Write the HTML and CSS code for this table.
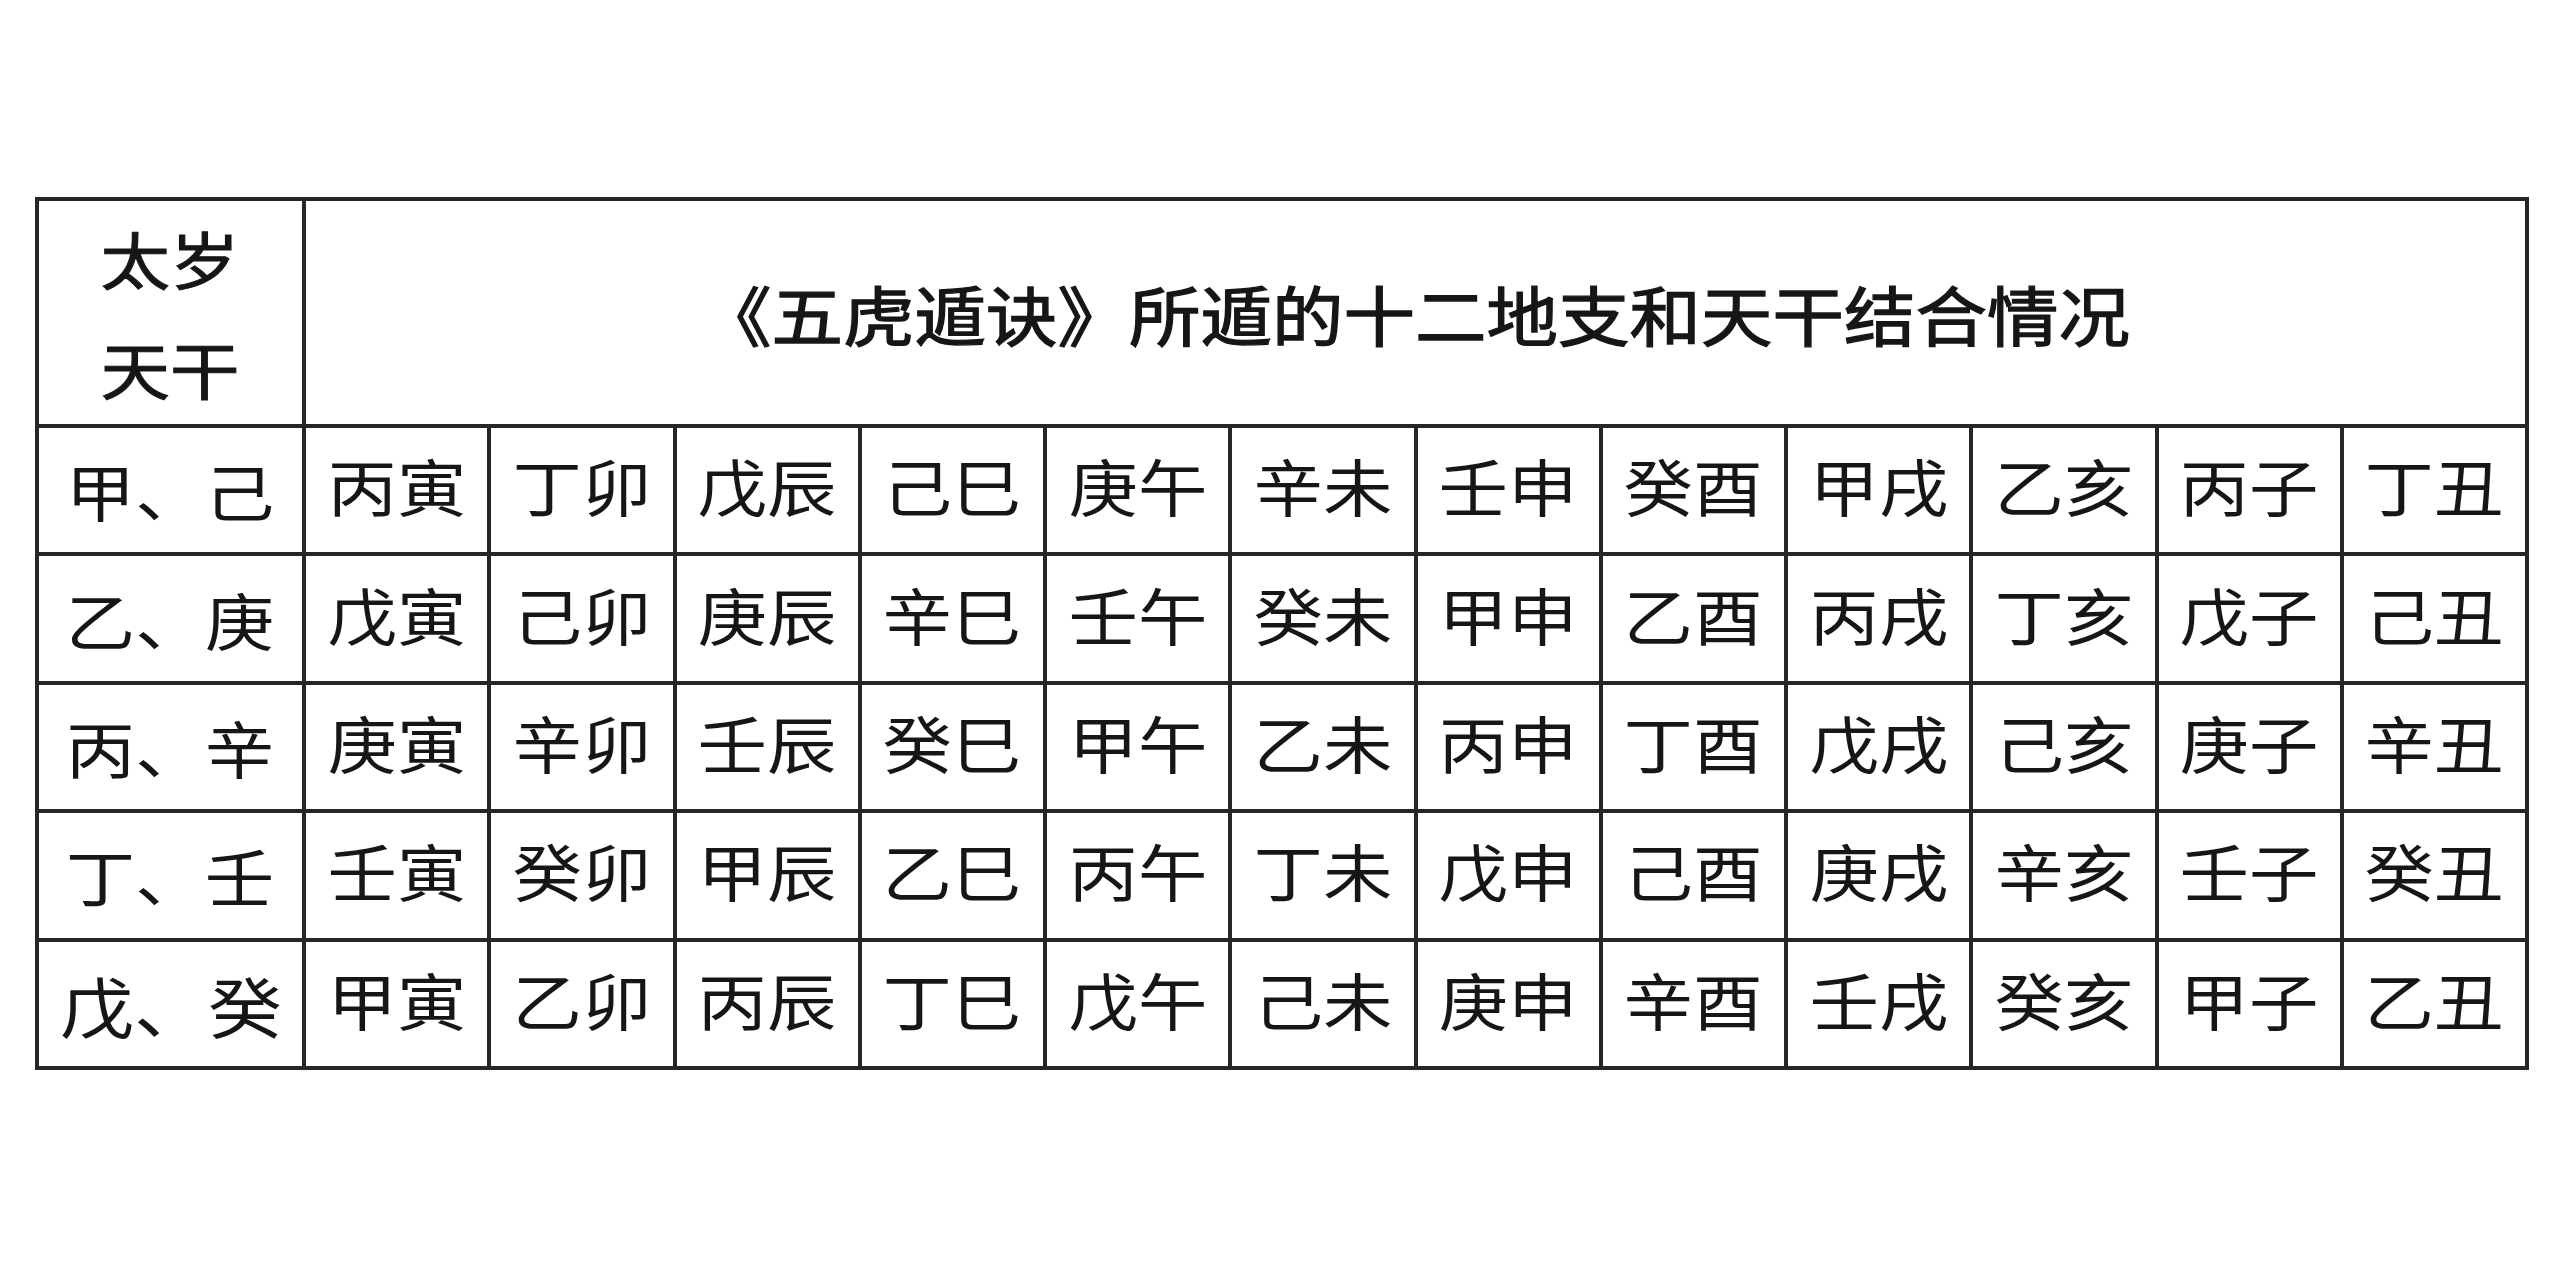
FILE: index.html
```html
<!DOCTYPE html>
<html lang="zh-CN">
<head>
<meta charset="utf-8">
<title>五虎遁诀</title>
<link rel="stylesheet" href="styles.css">
</head>
<body>
<table class="grid">
  <colgroup>
    <col class="c-first">
    <col span="12">
  </colgroup>
  <thead>
    <tr class="head">
      <th class="corner"><span class="t">太岁</span><br><span class="t">天干</span></th>
      <th class="title" colspan="12"><span class="t">《五虎遁诀》所遁的十二地支和天干结合情况</span></th>
    </tr>
  </thead>
  <tbody>
    <tr>
      <th class="stem"><span class="t">甲、己</span></th>
      <td><span class="t">丙寅</span></td><td><span class="t">丁卯</span></td><td><span class="t">戊辰</span></td><td><span class="t">己巳</span></td><td><span class="t">庚午</span></td><td><span class="t">辛未</span></td><td><span class="t">壬申</span></td><td><span class="t">癸酉</span></td><td><span class="t">甲戌</span></td><td><span class="t">乙亥</span></td><td><span class="t">丙子</span></td><td><span class="t">丁丑</span></td>
    </tr>
    <tr>
      <th class="stem"><span class="t">乙、庚</span></th>
      <td><span class="t">戊寅</span></td><td><span class="t">己卯</span></td><td><span class="t">庚辰</span></td><td><span class="t">辛巳</span></td><td><span class="t">壬午</span></td><td><span class="t">癸未</span></td><td><span class="t">甲申</span></td><td><span class="t">乙酉</span></td><td><span class="t">丙戌</span></td><td><span class="t">丁亥</span></td><td><span class="t">戊子</span></td><td><span class="t">己丑</span></td>
    </tr>
    <tr>
      <th class="stem"><span class="t">丙、辛</span></th>
      <td><span class="t">庚寅</span></td><td><span class="t">辛卯</span></td><td><span class="t">壬辰</span></td><td><span class="t">癸巳</span></td><td><span class="t">甲午</span></td><td><span class="t">乙未</span></td><td><span class="t">丙申</span></td><td><span class="t">丁酉</span></td><td><span class="t">戊戌</span></td><td><span class="t">己亥</span></td><td><span class="t">庚子</span></td><td><span class="t">辛丑</span></td>
    </tr>
    <tr>
      <th class="stem"><span class="t">丁、壬</span></th>
      <td><span class="t">壬寅</span></td><td><span class="t">癸卯</span></td><td><span class="t">甲辰</span></td><td><span class="t">乙巳</span></td><td><span class="t">丙午</span></td><td><span class="t">丁未</span></td><td><span class="t">戊申</span></td><td><span class="t">己酉</span></td><td><span class="t">庚戌</span></td><td><span class="t">辛亥</span></td><td><span class="t">壬子</span></td><td><span class="t">癸丑</span></td>
    </tr>
    <tr>
      <th class="stem big"><span class="t">戊、癸</span></th>
      <td><span class="t">甲寅</span></td><td><span class="t">乙卯</span></td><td><span class="t">丙辰</span></td><td><span class="t">丁巳</span></td><td><span class="t">戊午</span></td><td><span class="t">己未</span></td><td><span class="t">庚申</span></td><td><span class="t">辛酉</span></td><td><span class="t">壬戌</span></td><td><span class="t">癸亥</span></td><td><span class="t">甲子</span></td><td><span class="t">乙丑</span></td>
    </tr>
  </tbody>
</table>
</body>
</html>
```

FILE: styles.css
```css
html, body {
  margin: 0;
  padding: 0;
  background: #ffffff;
}

body {
  padding: 197px 0 0 35px;
  font-family: "Noto Sans CJK SC", "Noto Sans", sans-serif;
  color: #161616;
}

.grid {
  border-collapse: collapse;
  table-layout: fixed;
  width: 2494px;
  height: 873px;
}

.c-first {
  width: 267px;
}

.grid th,
.grid td {
  border: 4px solid #262626;
  padding: 0;
  text-align: center;
  vertical-align: middle;
  font-weight: 400;
}

.head {
  height: 227px;
}

.grid tbody tr {
  height: 128px;
}

.t {
  display: inline-block;
  transform: scaleX(1.12);
  white-space: nowrap;
}

.corner {
  font-size: 62px;
  line-height: 110px;
  -webkit-text-stroke: 1px #161616;
}

.title {
  font-size: 65px;
  padding-top: 18px;
  padding-right: 22px;
  -webkit-text-stroke: 1.3px #161616;
}

.title .t {
  transform: scaleX(1.1);
}

.stem {
  font-size: 62px;
  line-height: 1;
  padding-bottom: 10px;
}

.stem.big {
  font-size: 66px;
}

.grid td {
  font-size: 62px;
  line-height: 1;
  padding-bottom: 10px;
}
```
